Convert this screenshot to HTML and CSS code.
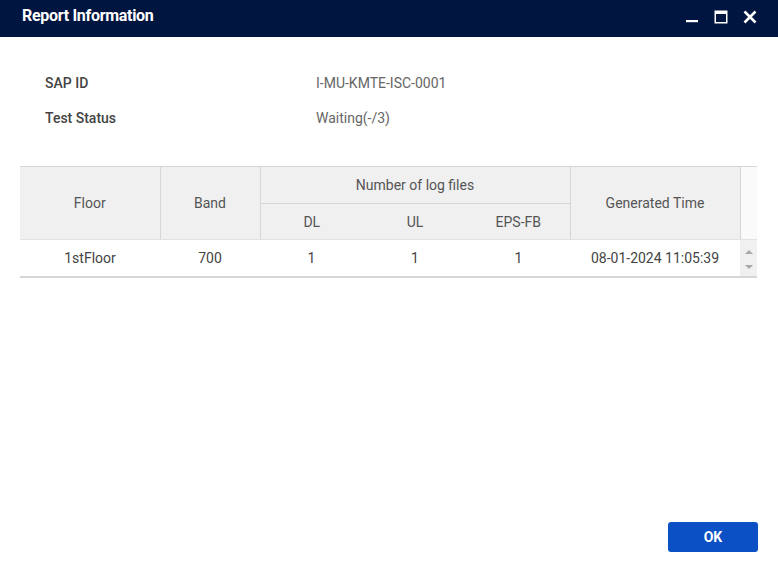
FILE: index.html
```html
<!DOCTYPE html>
<html>
<head>
<meta charset="utf-8">
<link rel="stylesheet" href="styles.css">
</head>
<body>
<div class="dialog">
  <div class="titlebar">
    <span class="title">Report Information</span>
    <div class="win-btns">
      <svg class="wb" width="14" height="14" viewBox="0 0 14 14"><rect x="1" y="10" width="12" height="2.2" fill="#fff"/></svg>
      <svg class="wb" width="14" height="14" viewBox="0 0 14 14"><rect x="1.25" y="1.25" width="11.5" height="11.5" fill="none" stroke="#fff" stroke-width="1.5"/><rect x="1" y="1" width="12" height="3" fill="#fff"/></svg>
      <svg class="wb" width="14" height="14" viewBox="0 0 14 14"><path d="M1.5 1.5 L12.5 12.5 M12.5 1.5 L1.5 12.5" stroke="#fff" stroke-width="2.6" stroke-linecap="butt"/></svg>
    </div>
  </div>
  <div class="content">
    <div class="info">
      <div class="info-row"><span class="label">SAP ID</span><span class="value">I-MU-KMTE-ISC-0001</span></div>
      <div class="info-row"><span class="label">Test Status</span><span class="value">Waiting(-/3)</span></div>
    </div>
    <table class="grid">
      <colgroup>
        <col class="c-floor"><col class="c-band"><col class="c-dl"><col class="c-ul"><col class="c-eps"><col class="c-time"><col class="c-scroll">
      </colgroup>
      <thead>
        <tr class="h1">
          <th rowspan="2">Floor</th>
          <th rowspan="2">Band</th>
          <th colspan="3" class="group">Number of log files</th>
          <th rowspan="2">Generated Time</th>
          <th rowspan="2" class="scroll-h"></th>
        </tr>
        <tr class="h2">
          <th class="sub">DL</th>
          <th class="sub">UL</th>
          <th class="sub last">EPS-FB</th>
        </tr>
      </thead>
      <tbody>
        <tr class="row">
          <td>1stFloor</td>
          <td>700</td>
          <td>1</td>
          <td>1</td>
          <td>1</td>
          <td>08-01-2024 11:05:39</td>
          <td class="scroll-b"><div class="arrows"><span class="up"></span><span class="down"></span></div></td>
        </tr>
      </tbody>
    </table>
  </div>
  <div class="footer">
    <button class="ok">OK</button>
  </div>
</div>
</body>
</html>
```
FILE: styles.css
```css
* { box-sizing: border-box; }
html, body { margin: 0; padding: 0; }
body {
  font-family: Roboto, "Liberation Sans", sans-serif;
  background: #fff;
  width: 778px;
  height: 564px;
  overflow: hidden;
}
.dialog {
  width: 778px;
  height: 564px;
  display: flex;
  flex-direction: column;
}
.titlebar {
  height: 37px;
  background: #00153f;
  display: flex;
  align-items: center;
  justify-content: space-between;
  padding: 0 21px 7px 22px;
}
.title {
  color: #fff;
  font-size: 16px;
  font-weight: 700;
  letter-spacing: -0.3px;
}
.win-btns {
  display: flex;
  gap: 15px;
  align-items: center;
  padding-top: 3px;
}
.wb { display: block; }
.content {
  flex: 1;
  padding: 28px 20px 0 20px;
}
.info {
  padding-left: 25px;
}
.info-row {
  display: flex;
  height: 35px;
  align-items: center;
  font-size: 14px;
}
.label {
  width: 271px;
  color: #444;
  font-weight: 500;
}
.value {
  color: #666;
}
.grid {
  margin-top: 31px;
  border-collapse: collapse;
  table-layout: fixed;
  width: 737px;
  font-size: 14px;
}
.c-floor { width: 140px; }
.c-band { width: 100px; }
.c-dl { width: 103px; }
.c-ul { width: 104px; }
.c-eps { width: 103px; }
.c-time { width: 170px; }
.c-scroll { width: 17px; }
.grid thead th {
  background: #f0f0f0;
  color: #555;
  font-weight: 400;
  border-right: 1px solid #d6d6d6;
  text-align: center;
  padding: 0;
}
.grid thead tr.h1 th { border-top: 1px solid #d6d6d6; }
.grid thead tr.h1 { height: 37px; }
.grid thead tr.h2 { height: 36px; }
.grid thead th.group { border-bottom: 1px solid #d6d6d6; }
.grid thead th.sub { border-right: none; }
.grid thead th.sub.last { border-right: 1px solid #d6d6d6; }
.grid thead th.scroll-h { background: #fafafa; border-right: none; }
.grid thead tr.h2 th { border-bottom: 1px solid #e2e2e2; }
.grid thead tr.h1 th[rowspan] { border-bottom: 1px solid #e2e2e2; }
.grid tbody tr.row { height: 37px; }
.grid tbody td {
  text-align: center;
  color: #444;
  padding: 0;
  border-bottom: 2px solid #d6d6d6;
}
.grid tbody td.scroll-b {
  background: #f0f0f0;
  position: relative;
}
.arrows {
  display: flex;
  flex-direction: column;
  align-items: center;
  justify-content: space-between;
  height: 22px;
  padding-top: 3px;
}
.up {
  width: 0; height: 0;
  border-left: 4px solid transparent;
  border-right: 4px solid transparent;
  border-bottom: 4px solid #a8a8a8;
}
.down {
  width: 0; height: 0;
  border-left: 4px solid transparent;
  border-right: 4px solid transparent;
  border-top: 4px solid #a8a8a8;
}
.footer {
  display: flex;
  justify-content: flex-end;
  padding: 0 20px 12px 0;
}
.ok {
  width: 90px;
  height: 30px;
  border: none;
  border-radius: 3px;
  background: #0b50c4;
  color: #fff;
  font-family: Roboto, "Liberation Sans", sans-serif;
  font-size: 14px;
  font-weight: 700;
}
```
